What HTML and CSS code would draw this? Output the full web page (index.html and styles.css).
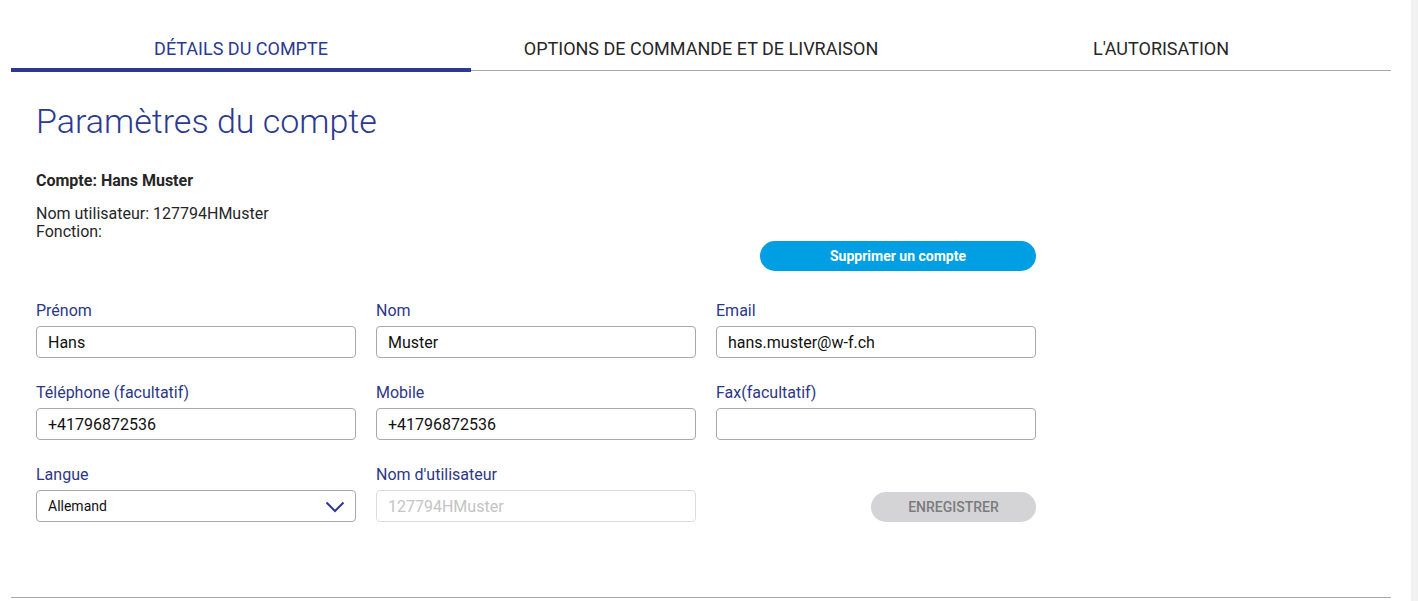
FILE: index.html
```html
<!DOCTYPE html>
<html lang="fr">
<head>
<meta charset="utf-8">
<title>Paramètres du compte</title>
<link rel="stylesheet" href="styles.css">
</head>
<body>
<div class="page">
  <main class="main">
    <nav class="tabs">
      <div class="tab active">DÉTAILS DU COMPTE</div>
      <div class="tab">OPTIONS DE COMMANDE ET DE LIVRAISON</div>
      <div class="tab">L'AUTORISATION</div>
    </nav>
    <section class="content">
      <h1 class="title">Paramètres du compte</h1>
      <div class="account">Compte: Hans Muster</div>
      <div class="info">
        <div>Nom utilisateur: 127794HMuster</div>
        <div>Fonction:</div>
      </div>
      <div class="actions">
        <button class="btn btn-blue" type="button">Supprimer un compte</button>
      </div>
      <form class="form">
        <div class="field">
          <label class="label">Prénom</label>
          <input class="input" type="text" value="Hans">
        </div>
        <div class="field">
          <label class="label">Nom</label>
          <input class="input" type="text" value="Muster">
        </div>
        <div class="field">
          <label class="label">Email</label>
          <input class="input" type="text" value="hans.muster@w-f.ch">
        </div>
        <div class="field">
          <label class="label">Téléphone (facultatif)</label>
          <input class="input" type="text" value="+41796872536">
        </div>
        <div class="field">
          <label class="label">Mobile</label>
          <input class="input" type="text" value="+41796872536">
        </div>
        <div class="field">
          <label class="label">Fax(facultatif)</label>
          <input class="input" type="text" value="">
        </div>
        <div class="field">
          <label class="label">Langue</label>
          <div class="select">
            <span class="select-value">Allemand</span>
            <svg class="chevron" width="20" height="12" viewBox="0 0 20 12"><path d="M1.5 1.5 L10 10 L18.5 1.5" fill="none" stroke="#2b3990" stroke-width="2"/></svg>
          </div>
        </div>
        <div class="field">
          <label class="label">Nom d'utilisateur</label>
          <input class="input input-disabled" type="text" placeholder="127794HMuster" disabled>
        </div>
        <div class="field field-end">
          <button class="btn btn-grey" type="button">ENREGISTRER</button>
        </div>
      </form>
    </section>
    <hr class="rule">
  </main>
  <div class="scrollbar"></div>
</div>
</body>
</html>
```
FILE: styles.css
```css
* { box-sizing: border-box; }
html, body { margin: 0; padding: 0; background: #fff; }
body {
  font-family: Roboto, "Liberation Sans", Arial, sans-serif;
  color: #262626;
}
.page {
  display: flex;
  width: 1418px;
  height: 601px;
  overflow: hidden;
}
.main {
  flex: 1;
  padding: 0 20px 0 11px;
}
.scrollbar {
  width: 7px;
  background: #f1f1f1;
  flex-shrink: 0;
}
.tabs {
  display: flex;
  border-bottom: 1px solid #a7a7a9;
  height: 71px;
  align-items: flex-start;
}
.tab {
  flex: 1;
  text-align: center;
  font-size: 18px;
  line-height: 20px;
  padding-top: 39px;
  height: 71px;
  color: #262626;
}
.tab.active {
  color: #2b3990;
  border-bottom: 4px solid #2b3990;
  height: 72px;
  margin-bottom: -1px;
}
.content {
  width: 1025px;
  padding-left: 25px;
}
.title {
  margin: 30px 0 0;
  font-weight: 300;
  font-size: 34px;
  line-height: 40px;
  color: #2b3990;
}
.account {
  margin-top: 31px;
  font-weight: 700;
  font-size: 16px;
  line-height: 18px;
}
.info {
  margin-top: 15px;
  font-size: 16px;
  line-height: 18px;
}
.actions {
  display: flex;
  justify-content: flex-end;
}
.btn {
  border: none;
  border-radius: 15px;
  height: 30px;
  font-family: Roboto, "Liberation Sans", Arial, sans-serif;
  font-weight: 700;
  font-size: 14px;
  cursor: pointer;
}
.btn-blue {
  width: 276px;
  background: #009fe3;
  color: #fff;
}
.btn-grey {
  width: 165px;
  background: #d4d4d6;
  color: #7b7b7d;
  font-weight: 500;
  font-size: 14px;
}
.form {
  margin-top: 31px;
  display: grid;
  grid-template-columns: repeat(3, 320px);
  column-gap: 20px;
  row-gap: 26px;
}
.field {
  display: flex;
  flex-direction: column;
}
.field-end {
  justify-content: flex-end;
  align-items: flex-end;
}
.label {
  font-size: 16px;
  line-height: 18px;
  margin-bottom: 6px;
  color: #2d3785;
}
.input {
  height: 32px;
  width: 100%;
  border: 1px solid #a9a9ab;
  border-radius: 4px;
  padding: 0 11px;
  font-family: Roboto, "Liberation Sans", Arial, sans-serif;
  font-size: 16px;
  color: #111;
  background: #fff;
  outline: none;
}
.input-disabled {
  border-color: #dcdcde;
  background: #fff;
}
.input-disabled::placeholder { color: #c4c4c6; }
.select {
  height: 32px;
  border: 1px solid #a9a9ab;
  border-radius: 4px;
  padding: 0 10px 0 11px;
  display: flex;
  align-items: center;
  justify-content: space-between;
}
.select-value {
  font-size: 14px;
  color: #111;
}
.chevron { display: block; margin-top: 2px; }
.rule {
  margin: 75px 0 0;
  border: none;
  border-top: 1px solid #a7a7a9;
  height: 0;
}
```
